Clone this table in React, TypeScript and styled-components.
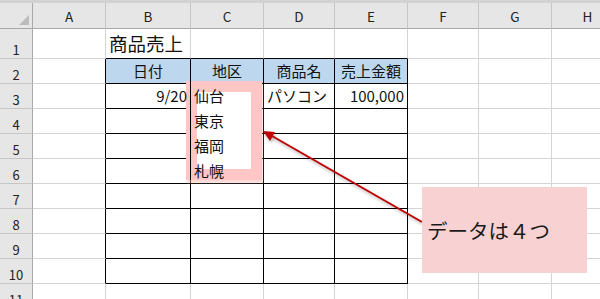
import React, { FC } from 'react';
import styled, { createGlobalStyle } from 'styled-components';

const GlobalStyle = createGlobalStyle`
  body {
    margin: 0;
    background: #fff;
    font-family: "Noto Sans CJK JP", "Noto Sans", sans-serif;
    color: #000;
  }
`;

const COLUMNS = ['A', 'B', 'C', 'D', 'E', 'F', 'G', 'H'];
const ROWS = [1, 2, 3, 4, 5, 6, 7, 8, 9, 10, 11];

const GRID_LINE = '#d4d4d4';
const TABLE_LINE = '#000';
const HEAD_LINE = '#c6c6c6';
const HEAD_EDGE = '#a9a9a9';

type Align = 'left' | 'center' | 'right';

interface CellData {
  text: string;
  align?: Align;
  size?: number;
}

// sales sheet contents, keyed by "<col><row>"
const cells: Record<string, CellData> = {
  B1: { text: '商品売上', size: 18.5 },
  B2: { text: '日付', align: 'center' },
  C2: { text: '地区', align: 'center' },
  D2: { text: '商品名', align: 'center' },
  E2: { text: '売上金額', align: 'center' },
  B3: { text: '9/20', align: 'right' },
  C3: { text: '仙台' },
  D3: { text: 'パソコン' },
  E3: { text: '100,000', align: 'right' },
  C4: { text: '東京' },
  C5: { text: '福岡' },
  C6: { text: '札幌' }
};

const Sheet = styled.div`
  position: relative;
  width: 600px;
  height: 299px;
  overflow: hidden;
  background: #fff;
`;

const FormulaEdge = styled.div`
  height: 3px;
  background: #d2d2d2;
`;

const Grid = styled.div`
  display: grid;
  grid-template-columns: 33px 73px 85px 73px 71px 73px 71px 73px 72px;
  grid-template-rows: 26px 30px repeat(10, 25px);
`;

const Corner = styled.div`
  position: relative;
  box-sizing: border-box;
  background: #e6e6e6;
  border-right: 1px solid ${HEAD_EDGE};
  border-bottom: 1px solid ${HEAD_EDGE};

  &::after {
    content: '';
    position: absolute;
    right: 3px;
    bottom: 3px;
    border-style: solid;
    border-width: 0 0 10px 10px;
    border-color: transparent transparent #bdbdbd transparent;
  }
`;

const ColHeader = styled.div`
  box-sizing: border-box;
  display: flex;
  align-items: center;
  justify-content: center;
  background: #e6e6e6;
  border-right: 1px solid ${HEAD_LINE};
  border-bottom: 1px solid ${HEAD_EDGE};
  font-size: 13.5px;
  color: #222;
`;

const RowHeader = styled.div`
  box-sizing: border-box;
  display: flex;
  align-items: flex-end;
  justify-content: center;
  padding-bottom: 1px;
  background: #e6e6e6;
  border-right: 1px solid ${HEAD_EDGE};
  border-bottom: 1px solid ${HEAD_LINE};
  font-size: 13px;
  line-height: 14px;
  color: #222;
`;

const Cell = styled.div<{ $align: Align; $fill?: string; $right: string; $bottom: string }>`
  box-sizing: border-box;
  display: flex;
  align-items: center;
  justify-content: ${({ $align }) => ($align === 'left' ? 'flex-start' : $align === 'right' ? 'flex-end' : 'center')};
  padding: 0 3px 0 3px;
  background: ${({ $fill }) => $fill || '#fff'};
  border-right: 1px solid ${({ $right }) => $right};
  border-bottom: 1px solid ${({ $bottom }) => $bottom};
  white-space: nowrap;
`;

const CellText = styled.span<{ $size: number }>`
  position: relative;
  z-index: 3;
  font-size: ${({ $size }) => $size}px;
  line-height: 1.2;
  color: #111;
`;

// pink marker frame around the region column
const Frame = styled.div`
  position: absolute;
  z-index: 2;
  left: 186px;
  top: 81px;
  width: 76px;
  height: 99px;
  box-sizing: border-box;
  border: 11px solid #ffc6c6;
  background: #fff;
  box-shadow: 1px 3px 2px rgba(245, 170, 170, 0.45);

  &::before {
    content: '';
    position: absolute;
    left: -7px;
    top: -11px;
    bottom: -11px;
    width: 1px;
    background: #000;
  }
`;

const Pointer = styled.svg`
  position: absolute;
  z-index: 4;
  left: 0;
  top: 0;
  pointer-events: none;
  filter: drop-shadow(1px 2px 1.5px rgba(0, 0, 0, 0.3));
`;

const Callout = styled.div`
  position: absolute;
  z-index: 5;
  left: 422px;
  top: 187px;
  width: 165px;
  height: 86px;
  box-sizing: border-box;
  display: flex;
  align-items: center;
  padding-left: 5px;
  background: #f8d1d3;
  font-size: 20.5px;
  color: #1a1a1a;
  white-space: nowrap;
`;

const rightLine = (c: number, r: number): string => {
  const inTable = c >= 1 && c <= 4 && r >= 2 && r <= 10;
  if (inTable || (c === 0 && r >= 2 && r <= 10)) return TABLE_LINE;
  return GRID_LINE;
};

const bottomLine = (c: number, r: number): string => {
  const inTable = c >= 1 && c <= 4 && r >= 2 && r <= 10;
  if (inTable || (r === 1 && c >= 1 && c <= 4)) return TABLE_LINE;
  return GRID_LINE;
};

const App: FC = () => {
  return (
    <Sheet>
      <GlobalStyle />
      <FormulaEdge />
      <Grid>
        <Corner />
        {COLUMNS.map((col) => (
          <ColHeader key={col}>{col}</ColHeader>
        ))}
        {ROWS.map((row) => (
          <React.Fragment key={row}>
            <RowHeader>{row}</RowHeader>
            {COLUMNS.map((col, c) => {
              const data = cells[`${col}${row}`];
              return (
                <Cell
                  key={col}
                  $align={data?.align || 'left'}
                  $fill={row === 2 && c >= 1 && c <= 4 ? '#bdd7ee' : undefined}
                  $right={rightLine(c, row)}
                  $bottom={bottomLine(c, row)}
                >
                  {data && <CellText $size={data.size || 15}>{data.text}</CellText>}
                </Cell>
              );
            })}
          </React.Fragment>
        ))}
      </Grid>
      <Frame />
      <Pointer width={600} height={299} viewBox="0 0 600 299">
        <line x1={422} y1={222} x2={272} y2={136} stroke="#c00000" strokeWidth={2} />
        <polygon points="263,131 275,132 270,141" fill="#c00000" />
      </Pointer>
      <Callout>データは４つ</Callout>
    </Sheet>
  );
};

export default App;
